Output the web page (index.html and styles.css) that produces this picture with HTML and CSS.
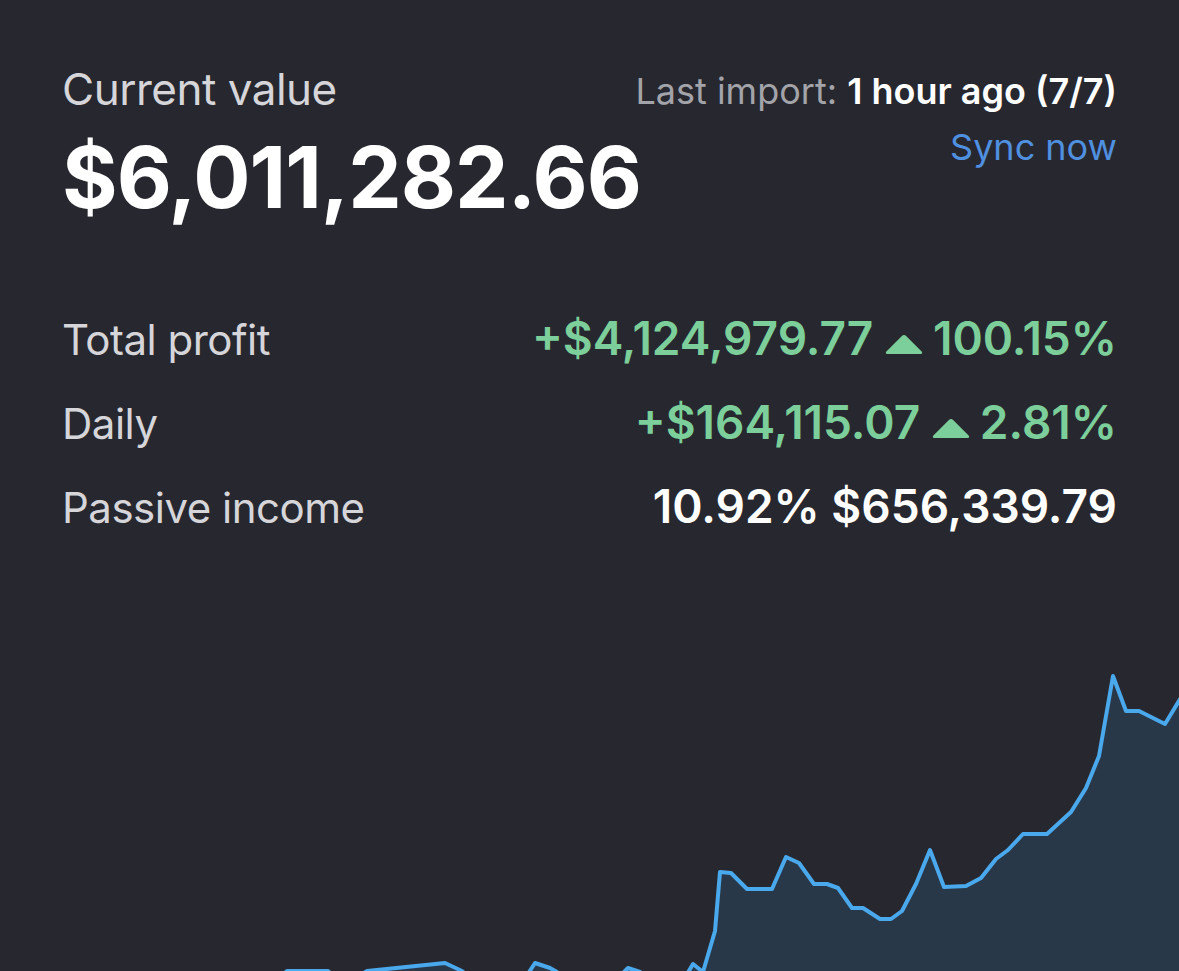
FILE: index.html
```html
<!DOCTYPE html>
<html lang="en">
<head>
    <meta charset="UTF-8">
    <meta name="viewport" content="width=device-width, initial-scale=1.0">
    <title>Portfolio</title>
    <link rel="stylesheet" href="styles.css">
</head>
<body>
    <div class="summary">
        <div class="top">
            <div class="current">
                <div class="label">Current value</div>
                <div class="total">$6,011,282.66</div>
            </div>
            <div class="import">
                <div class="last">Last import: <b>1 hour ago (7/7)</b></div>
                <a class="sync" href="#">Sync now</a>
            </div>
        </div>

        <div class="stats">
            <div class="row">
                <span class="label">Total profit</span>
                <span class="value up">+$4,124,979.77 <svg class="arrow" viewBox="0 0 36 20"><path d="M16 2 Q18 0 20 2 L35 17 Q36 19 34 19 L2 19 Q0 19 1 17 Z"/></svg>100.15%</span>
            </div>
            <div class="row">
                <span class="label">Daily</span>
                <span class="value up">+$164,115.07 <svg class="arrow" viewBox="0 0 36 20"><path d="M16 2 Q18 0 20 2 L35 17 Q36 19 34 19 L2 19 Q0 19 1 17 Z"/></svg>2.81%</span>
            </div>
            <div class="row">
                <span class="label">Passive income</span>
                <span class="value">10.92% $656,339.79</span>
            </div>
        </div>
    </div>

    <div class="chart">
        <svg viewBox="0 0 1179 340" width="1179" height="340">
            <path class="area" d="M287 330 L328 330 L345 345 L367 330 L445 322 L462 330 L480 345 L520 345 L535 322 L550 327 L557 331 L575 345 L610 345 L628 327 L640 331 L660 345 L680 345 L693 323 L703 331 L715 290 L720 231 L731 232 L747 248 L772 248 L786 216 L799 222 L814 243 L827 243 L838 247 L852 267 L863 267 L880 278 L891 278 L902 270 L916 243 L930 209 L944 246 L966 245 L981 237 L996 218 L1008 209 L1023 193 L1047 193 L1071 171 L1086 147 L1099 115 L1113 35 L1126 70 L1139 70 L1165 83 L1182 55 L1182 340 L287 340 Z"/>
            <path class="line" d="M270 345 L287 330 L328 330 L345 345 L367 330 L445 322 L462 330 L480 345 L520 345 L535 322 L550 327 L557 331 L575 345 L610 345 L628 327 L640 331 L660 345 L680 345 L693 323 L703 331 L715 290 L720 231 L731 232 L747 248 L772 248 L786 216 L799 222 L814 243 L827 243 L838 247 L852 267 L863 267 L880 278 L891 278 L902 270 L916 243 L930 209 L944 246 L966 245 L981 237 L996 218 L1008 209 L1023 193 L1047 193 L1071 171 L1086 147 L1099 115 L1113 35 L1126 70 L1139 70 L1165 83 L1182 55"/>
        </svg>
    </div>
</body>
</html>
```

FILE: styles.css
```css
body {
    margin: 0;
    background-color: #27282f;
    color: #ffffff;
    font-family: Inter, "Noto Sans", sans-serif;
    overflow: hidden;
}
.summary {
    padding: 62px 62px 0 62px;
}
.top {
    display: flex;
    justify-content: space-between;
    align-items: flex-start;
}
.current {
    min-width: 0;
    white-space: nowrap;
}
.label {
    color: #d6d6da;
    font-size: 42px;
    letter-spacing: -0.5px;
}
.current .label {
    font-size: 44px;
}
.total {
    font-size: 85px;
    font-weight: 700;
    letter-spacing: -1px;
    margin-top: 10px;
}
.import {
    flex-shrink: 0;
    text-align: right;
    padding-top: 7px;
    white-space: nowrap;
}
.last {
    color: #a3a3aa;
    font-size: 36px;
}
.last b {
    color: #ffffff;
    font-weight: 600;
}
.sync {
    display: block;
    color: #5090e0;
    font-size: 36px;
    text-decoration: none;
    margin-top: 12px;
}
.stats {
    margin-top: 81px;
}
.row {
    display: flex;
    justify-content: space-between;
    align-items: baseline;
    height: 84px;
}
.value {
    font-size: 46px;
    font-weight: 600;
}
.value.up {
    color: #7ccf9a;
}
.arrow {
    width: 38px;
    height: 21px;
    margin: 0 10px 0 0;
    fill: #7ccf9a;
}
.chart {
    margin-top: 79px;
}
.chart svg {
    display: block;
}
.area {
    fill: #2a3a4d;
    opacity: 0.9;
}
.line {
    fill: none;
    stroke: #4aa8ec;
    stroke-width: 4;
    stroke-linejoin: round;
}
```
